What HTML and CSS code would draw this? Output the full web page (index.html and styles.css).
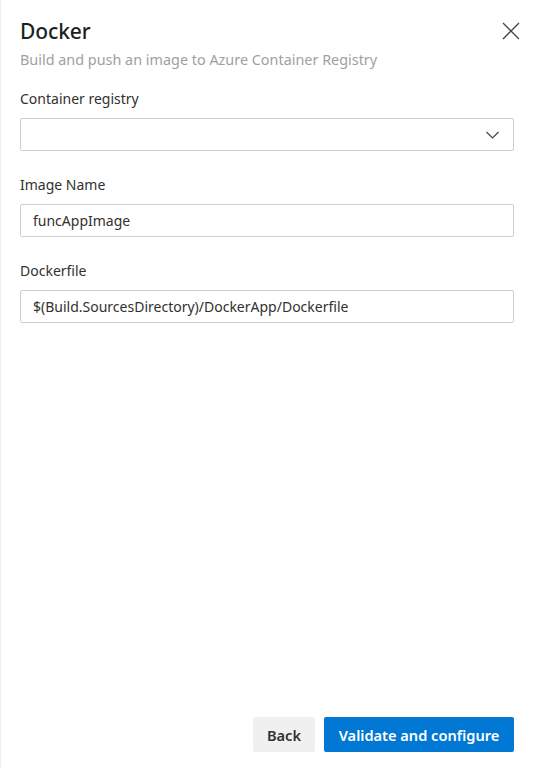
FILE: index.html
```html
<!DOCTYPE html>
<html lang="en">
<head>
<meta charset="utf-8">
<title>Docker</title>
<link rel="stylesheet" href="styles.css">
</head>
<body>
<div class="panel">
  <header class="header">
    <div class="titles">
      <h1 class="title">Docker</h1>
      <p class="subtitle">Build and push an image to Azure Container Registry</p>
    </div>
    <button class="close" aria-label="Close">
      <svg width="18" height="18" viewBox="0 0 18 18"><path d="M1 1 L17 17 M17 1 L1 17" stroke="#444" stroke-width="1.3" fill="none"/></svg>
    </button>
  </header>

  <div class="field first">
    <label class="label">Container registry</label>
    <div class="box select">
      <span class="value"></span>
      <svg class="chev" width="13" height="8" viewBox="0 0 13 8"><path d="M0.5 1 L6.5 7 L12.5 1" stroke="#444" stroke-width="1.2" fill="none"/></svg>
    </div>
  </div>

  <div class="field">
    <label class="label">Image Name</label>
    <div class="box"><span class="value">funcAppImage</span></div>
  </div>

  <div class="field">
    <label class="label">Dockerfile</label>
    <div class="box"><span class="value">$(Build.SourcesDirectory)/DockerApp/Dockerfile</span></div>
  </div>

  <footer class="footer">
    <button class="btn back">Back</button>
    <button class="btn primary">Validate and configure</button>
  </footer>
</div>
</body>
</html>
```
FILE: styles.css
```css
html, body {
  margin: 0;
  padding: 0;
  height: 100%;
  background: #ffffff;
}
body {
  font-family: "Noto Sans", "Open Sans", sans-serif;
  color: #323130;
}
.panel {
  box-sizing: border-box;
  height: 100vh;
  padding: 16px 20px 16px 20px;
  display: flex;
  flex-direction: column;
  box-shadow: inset 1px 0 0 #f0f0f0;
}
.header {
  display: flex;
  justify-content: space-between;
  align-items: flex-start;
}
.title {
  margin: 0;
  font-size: 21px;
  line-height: 30px;
  font-weight: 500;
  color: #201f1e;
  letter-spacing: -0.1px;
}
.subtitle {
  margin: 4px 0 0 0;
  font-size: 14.4px;
  line-height: 20px;
  color: #a19f9d;
}
.close {
  border: none;
  background: transparent;
  padding: 0;
  margin: 6px -6px 0 0;
  width: 18px;
  height: 18px;
  display: flex;
}
.field {
  display: flex;
  flex-direction: column;
  margin-top: 24px;
}
.field.first {
  margin-top: 19px;
}
.label {
  font-size: 14px;
  line-height: 20px;
  color: #323130;
  margin-bottom: 9px;
}
.box {
  box-sizing: border-box;
  height: 33px;
  border: 1px solid #cfcfcf;
  border-radius: 2px;
  display: flex;
  align-items: center;
  padding: 0;
  font-size: 14px;
  color: #323130;
}
.value {
  display: block;
  margin-left: 12px;
}
.select {
  justify-content: space-between;
}
.chev {
  margin-right: 14px;
}
.footer {
  margin-top: auto;
  display: flex;
  justify-content: flex-end;
  gap: 9px;
}
.btn {
  font-family: "Noto Sans", "Open Sans", sans-serif;
  height: 35px;
  border: none;
  border-radius: 2px;
  font-size: 14.6px;
  font-weight: 600;
  padding: 0 12px;
}
.back {
  width: 62px;
  background: #f0f0f0;
  color: #323130;
}
.primary {
  width: 190px;
  background: #0078d4;
  color: #ffffff;
}
```
